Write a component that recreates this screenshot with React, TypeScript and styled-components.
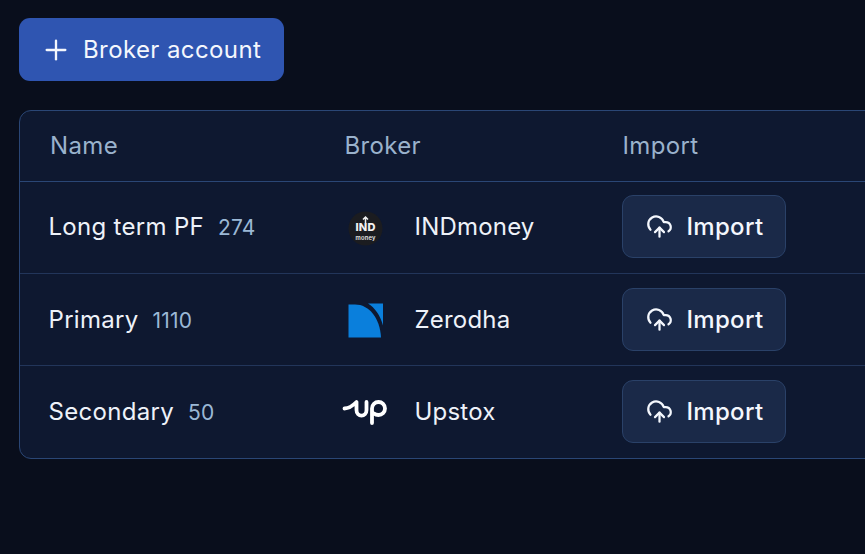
import React from "react";
import styled, { createGlobalStyle } from "styled-components";
import { Plus, CloudUpload } from "lucide-react";

const Global = createGlobalStyle`
  html, body { margin: 0; padding: 0; width: 865px; height: 554px; overflow: hidden; background: #090e1c; }
  body { font-family: Inter, "Liberation Sans", sans-serif; }
`;

const Page = styled.main`
  width: 865px;
  height: 554px;
  box-sizing: border-box;
  padding: 18px 0 0 19px;
  background: #090e1c;
  overflow: hidden;
`;

const AddButton = styled.button`
  display: flex;
  align-items: center;
  gap: 11.5px;
  width: 265px;
  height: 63px;
  box-sizing: border-box;
  padding: 0 0 0 20.5px;
  border: 0;
  border-radius: 11px;
  background: #2f55b1;
  color: #f4f7fd;
  font: 400 24px Inter, sans-serif;
  letter-spacing: 0.4px;
`;

const Table = styled.section`
  width: 920px;
  margin-top: 29px;
  box-sizing: border-box;
  border: 1px solid #2a4675;
  border-radius: 12px;
  background: #0e1830;
  overflow: hidden;
`;

const Row = styled.div<{ $head?: boolean }>`
  display: grid;
  grid-template-columns: 324.5px 277.5px 1fr;
  align-items: center;
  height: ${(p) => (p.$head ? "70px" : "92px")};
  box-sizing: border-box;
  border-top: ${(p) => (p.$head ? "0" : "1px solid #22355a")};
  padding-bottom: ${(p) => (p.$head ? "2px" : "0")};
  &:nth-child(2) { border-top-color: #2a4675; padding-bottom: 2px; }
  &:last-child { height: 93px; padding-bottom: 1px; }
`;

const HeadCell = styled.div`
  font-size: 24px;
  letter-spacing: 0.35px;
  color: #9ab2cc;
  &:first-child { padding-left: 30px; }
  &:last-child { padding-left: 0.5px; }
`;

const NameCell = styled.div`
  display: flex;
  align-items: baseline;
  gap: 14px;
  padding-left: 28.5px;
  font-size: 24px;
  letter-spacing: 0.3px;
  color: #eef2f9;
`;

const Count = styled.span`
  font-size: 21px;
  letter-spacing: 0.2px;
  color: #9bb8d6;
`;

const BrokerCell = styled.div`
  display: flex;
  align-items: center;
  gap: 30px;
  font-size: 24px;
  letter-spacing: 0.2px;
  color: #eef2f9;
`;

const Logo = styled.svg<{ $wide?: boolean }>`
  width: ${(p) => (p.$wide ? "46px" : "40px")};
  height: 40px;
  flex: none;
  margin: ${(p) => (p.$wide ? "0 -3px" : "0")};
`;

const ImportButton = styled.button`
  display: flex;
  align-items: center;
  gap: 13.5px;
  width: 164px;
  height: 63px;
  box-sizing: border-box;
  padding: 0 0 0 23px;
  border: 1px solid #2a4168;
  border-radius: 11px;
  background: #1a2948;
  color: #f4f7fd;
  font: 500 24px Inter, sans-serif;
  letter-spacing: 0.3px;
`;

const IndMoney = () => (
  <Logo viewBox="0 0 40 40">
    <circle cx="20.500" cy="21.500" r="17" fill="#1b1c20" />
    <text x="20.500" y="24" textAnchor="middle" fontFamily="Inter, sans-serif" fontWeight="800" fontSize="11" fill="#f2f2f2">IND</text>
    <path d="M20.500 10v6M18 12.500l2.500-2.500 2.500 2.500" fill="none" stroke="#f2f2f2" strokeWidth="1.500" />
    <text x="20.500" y="32.500" textAnchor="middle" fontFamily="Inter, sans-serif" fontWeight="600" fontSize="5.800" fill="#e8e8e8">money</text>
  </Logo>
);

const Zerodha = () => (
  <Logo viewBox="0 0 40 40">
    <path d="M3.500 4.500H10C24 4.500 35 18 36 37.500H3.500z" fill="#0a7fdc" />
    <path d="M23 3.500H38V25.500C35 15 30 8 23 3.500z" fill="#0a7fdc" />
  </Logo>
);

const Upstox = () => (
  <Logo $wide viewBox="0 0 46 40">
    <path d="M2.500 16.500c4 0 8-2.500 12-6.500V18c0 7.500 10 7.500 10 0v-8" fill="none" stroke="#fff" strokeWidth="3.800" strokeLinecap="round" strokeLinejoin="round" />
    <path d="M30 31V16.500a6.500 6.500 0 1 1 6.500 6.500c-1.800 0-3.300-.5-4.500-1.500" fill="none" stroke="#fff" strokeWidth="3.800" strokeLinecap="round" />
  </Logo>
);

const rows = [
  { name: "Long term PF", count: 274, broker: "INDmoney", logo: <IndMoney /> },
  { name: "Primary", count: 1110, broker: "Zerodha", logo: <Zerodha /> },
  { name: "Secondary", count: 50, broker: "Upstox", logo: <Upstox /> },
];

export default function App() {
  return (
    <Page>
      <Global />
      <AddButton>
        <Plus size={32} strokeWidth={1.75} />
        Broker account
      </AddButton>
      <Table>
        <Row $head>
          <HeadCell>Name</HeadCell>
          <HeadCell>Broker</HeadCell>
          <HeadCell>Import</HeadCell>
        </Row>
        {rows.map((r) => (
          <Row key={r.name}>
            <NameCell>
              {r.name}
              <Count>{r.count}</Count>
            </NameCell>
            <BrokerCell>
              {r.logo}
              {r.broker}
            </BrokerCell>
            <div>
              <ImportButton>
                <CloudUpload size={27} strokeWidth={2} />
                Import
              </ImportButton>
            </div>
          </Row>
        ))}
      </Table>
    </Page>
  );
}
